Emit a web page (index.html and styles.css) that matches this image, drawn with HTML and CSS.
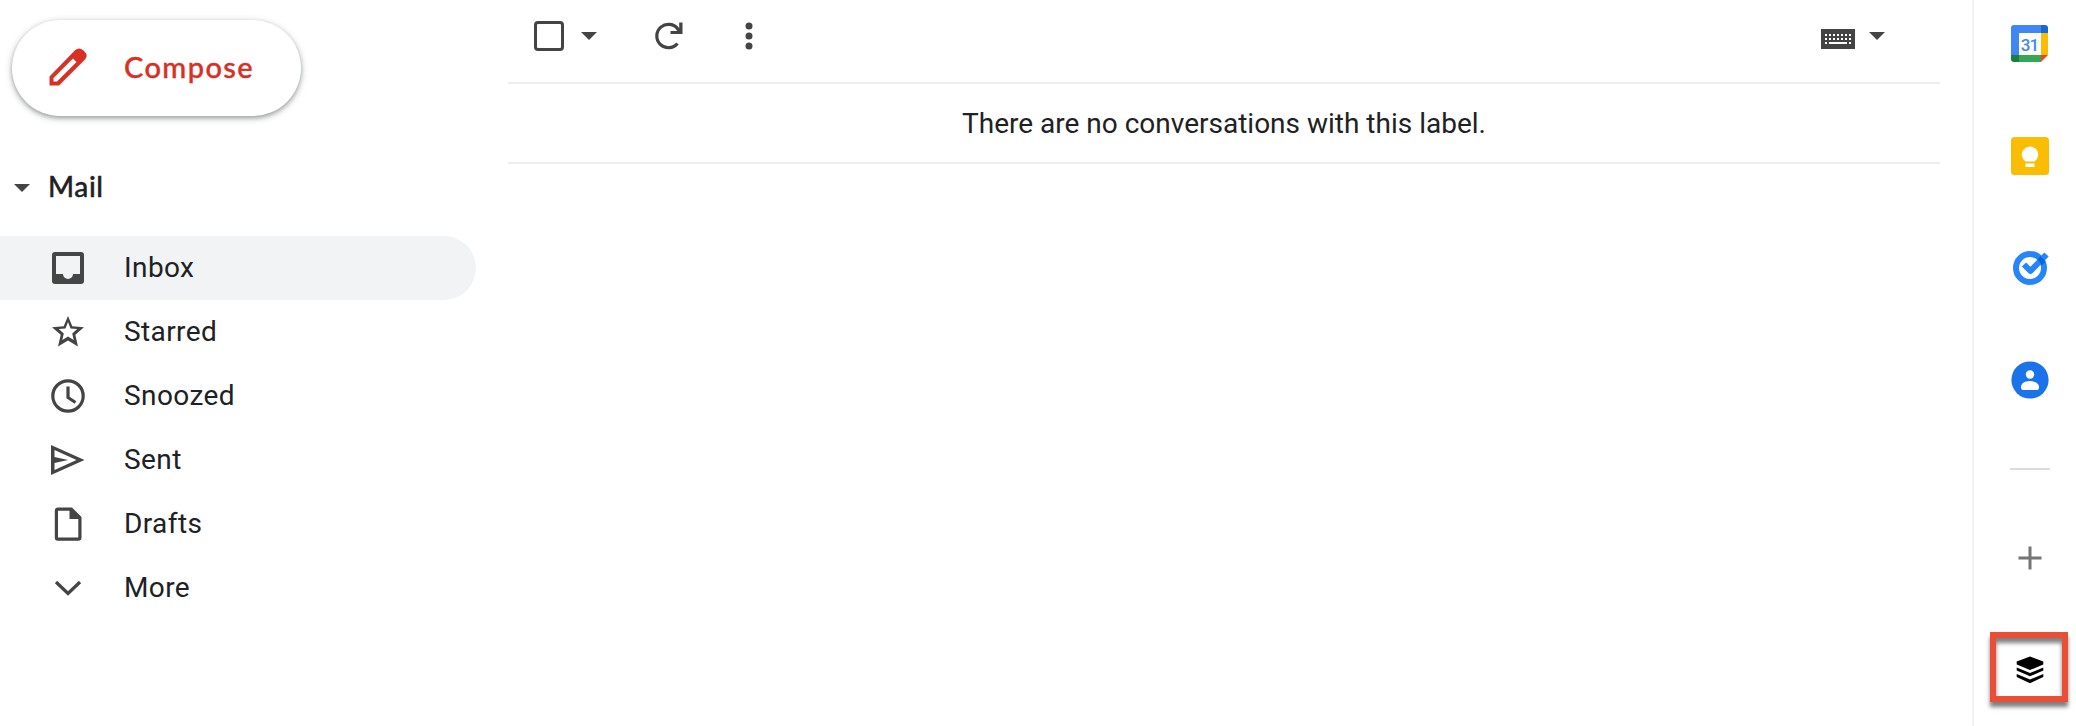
FILE: index.html
```html
<!DOCTYPE html>
<html lang="en">
<head>
  <meta charset="UTF-8">
  <meta name="viewport" content="width=device-width, initial-scale=1.0">
  <title>Inbox</title>
  <link rel="stylesheet" href="styles.css">
</head>
<body>
  <aside class="sidebar">
    <button class="compose">
      <svg width="38" height="38" viewBox="0 0 38 38">
        <path fill="#d93025" fill-rule="evenodd" d="M0.500 37.500v-9L26 2.200q4-3.500 8-.200l1.500 1.500q4 4 .500 8L10 37.500zM4.500 33.500h3.500L27.500 14l-3.500-3.500L4.500 30z"/>
      </svg>
      <span>Compose</span>
    </button>

    <h2 class="section-title"><i class="caret"></i><span>Mail</span></h2>

    <ul class="folders">
      <li class="active">
        <svg width="36" height="36" viewBox="0 0 36 36">
          <path fill="#444746" fill-rule="evenodd" d="M5 2h26a3 3 0 0 1 3 3v26a3 3 0 0 1-3 3H5a3 3 0 0 1-3-3V5a3 3 0 0 1 3-3zM6 6v18h7a5 5 0 0 0 10 0h7V6z"/>
        </svg>
        Inbox
      </li>
      <li>
        <svg width="36" height="36" viewBox="0 0 36 36">
          <path fill="#444" fill-rule="evenodd" d="M18 2l4.300 10.300L34 13.300l-8.700 7.500L28 32.500l-10-6.100-10 6.100 2.700-11.700L2 13.300l11.700-1zM18 8l-2.500 6.500-6.700.500 5 4.400-1.500 6.600 5.700-3.400 5.700 3.400-1.500-6.600 5-4.400-6.700-.500z"/>
        </svg>
        Starred
      </li>
      <li>
        <svg width="36" height="36" viewBox="0 0 36 36" fill="none" stroke="#444" stroke-width="3.200">
          <circle cx="18" cy="18" r="15.200"/>
          <path d="M18 8.500v11l7.500 5"/>
        </svg>
        Snoozed
      </li>
      <li>
        <svg width="36" height="36" viewBox="0 0 36 36">
          <path fill="#444" fill-rule="evenodd" d="M1 3l33.500 15L1 33zM4.500 8v7L18 18 4.500 21v7L26.500 18z"/>
        </svg>
        Sent
      </li>
      <li>
        <svg width="36" height="36" viewBox="0 0 36 36">
          <path fill="#444" fill-rule="evenodd" d="M8 1.500h14L31.500 11v20.500a3.200 3.200 0 0 1-3.200 3.200H8a3.200 3.200 0 0 1-3.200-3.200V4.700A3.200 3.200 0 0 1 8 1.500zM8 4.700v26.800h20.300V13H19.500V4.700z"/>
        </svg>
        Drafts
      </li>
      <li>
        <svg width="36" height="36" viewBox="0 0 36 36" fill="none" stroke="#444" stroke-width="3.200">
          <path d="M6 12l12 11.500L30 12"/>
        </svg>
        More
      </li>
    </ul>
  </aside>

  <main class="main">
    <div class="toolbar">
      <span class="checkbox"></span>
      <i class="caret caret-select"></i>
      <svg class="refresh" width="28" height="28" viewBox="0 0 28 28">
        <path fill="none" stroke="#444" stroke-width="3.200" d="M22.500 21.500A11.700 11.700 0 1 1 23 7.200L26 10.500"/>
        <path fill="#444" d="M24.200 0.500h3.300v11.500H15.500V9h6l2.700-2z"/>
      </svg>
      <svg class="dots" width="8" height="28" viewBox="0 0 8 28" fill="#444">
        <circle cx="4" cy="4" r="3.500"/>
        <circle cx="4" cy="14" r="3.500"/>
        <circle cx="4" cy="24" r="3.500"/>
      </svg>
      <svg class="keyboard" width="34" height="20" viewBox="0 0 34 20">
        <path fill="#444" d="M0 0h34v20H0z"/>
        <path stroke="#fff" stroke-width="2" stroke-dasharray="2 2" d="M4 6h26M4 10h26"/>
        <path stroke="#fff" stroke-width="2" d="M4 14h2M8 14h18M28 14h2"/>
      </svg>
      <i class="caret caret-input"></i>
    </div>
    <p class="empty">There are no conversations with this label.</p>
  </main>

  <nav class="addons">
    <svg class="calendar" width="38" height="38" viewBox="0 0 38 38">
      <path fill="#4285f4" d="M3 0h27v8H8v22H0V3a3 3 0 0 1 3-3z"/>
      <path fill="#1967d2" d="M30 0h4a3 3 0 0 1 3 3v5h-7z"/>
      <path fill="#fbbc04" d="M30 8h7v22h-7z"/>
      <path fill="#34a853" d="M8 30h22v7H8z"/>
      <path fill="#188038" d="M0 30h8v7H3a3 3 0 0 1-3-3z"/>
      <path fill="#ea4335" d="M30 30h7l-7 7z"/>
      <text x="18.500" y="25.500" text-anchor="middle">31</text>
    </svg>
    <svg class="keep" width="38" height="38" viewBox="0 0 38 38">
      <rect width="38" height="38" rx="3.500" fill="#fbbc04"/>
      <path fill="#fff" d="M14.500 24.500a8.200 8.200 0 1 1 9 0zM14.500 26.500h9v3.500h-9z"/>
    </svg>
    <svg class="tasks" width="38" height="38" viewBox="0 0 38 38">
      <circle cx="19" cy="19" r="14" fill="none" stroke="#2684fc" stroke-width="6"/>
      <path fill="none" stroke="#2684fc" stroke-width="6" stroke-linejoin="round" d="M13 15.500l6.500 6.500L35.500 5.500"/>
      <path fill="#0066da" d="M26.500 10.500l3-3.300q3.500 2.500 4.800 5.800l-3.800 3.500q-1-3.800-4-6z"/>
    </svg>
    <svg class="contacts" width="38" height="38" viewBox="0 0 38 38">
      <circle cx="19" cy="19" r="18.600" fill="#1a73e8"/>
      <circle cx="19" cy="13.500" r="4.200" fill="#fff"/>
      <path fill="#fff" d="M10 26c0-8 18-8 18 0q0 3-2 3H12q-2 0-2-3z"/>
    </svg>
    <hr>
    <svg class="plus" width="24" height="24" viewBox="0 0 24 24" stroke="#757575" stroke-width="3">
      <path d="M0.500 12h23M12 .500v23"/>
    </svg>
    <div class="highlight">
      <svg width="28" height="28" viewBox="0 0 28 28">
        <path d="M14 .500l13.300 5v3L14 14 .700 8.500v-3z"/>
        <path d="M.700 11.500L14 17l13.300-5.500v3L14 20.300.700 14.500z"/>
        <path d="M.700 18L14 23.500 27.300 18v3L14 27.200.700 21z"/>
      </svg>
    </div>
  </nav>
</body>
</html>
```
FILE: styles.css
```css
* {
  box-sizing: border-box;
}

body {
  font-family: Roboto, Arial, sans-serif;
  font-size: 28px;
  color: #202124;
  background: #fff;
  margin: 0;
  height: 726px;
  display: flex;
  overflow: hidden;
}

svg {
  display: block;
  flex: none;
}

.caret {
  flex: none;
  width: 16px;
  height: 8px;
  background: #444;
  clip-path: polygon(0 0, 100% 0, 50% 100%);
}

.sidebar {
  width: 508px;
  padding-top: 20px;
}

.compose {
  display: flex;
  align-items: center;
  width: 289px;
  height: 96px;
  margin-left: 12px;
  padding: 0 0 2px 37px;
  border: 0;
  border-radius: 48px;
  background: #fff;
  box-shadow: 0 2px 4px rgba(60, 64, 67, 0.4), 0 2px 6px 2px rgba(60, 64, 67, 0.15);
  font: 500 29px Lato, sans-serif;
  letter-spacing: 1.4px;
  color: #d93025;
}

.compose span {
  margin-left: 37px;
  padding-bottom: 2px;
  -webkit-text-stroke: 0.4px #d93025;
}

.section-title {
  display: flex;
  align-items: center;
  height: 64px;
  margin: 39px 0 17px;
  padding-left: 14px;
  font: 500 28px Lato, sans-serif;
  letter-spacing: 0.6px;
}

.section-title .caret {
  margin: 2px 18px 0 0;
}

.section-title span {
  padding-bottom: 2px;
  -webkit-text-stroke: 0.4px #202124;
}

.folders {
  list-style: none;
  margin: 0;
  padding: 0;
}

.folders li {
  display: flex;
  align-items: center;
  width: 476px;
  height: 64px;
  padding: 0 0 1px 50px;
  letter-spacing: 0.4px;
  border-radius: 0 32px 32px 0;
}

.folders svg {
  margin-right: 38px;
}

.folders .active {
  background: #f1f3f4;
}

.main {
  width: 1432px;
}

.toolbar {
  display: flex;
  align-items: center;
  height: 84px;
  padding: 0 55px 10px 26px;
  border-bottom: 2px solid #eee;
}

.checkbox {
  width: 30px;
  height: 30px;
  border: 3px solid #444;
  border-radius: 4px;
}

.caret-select {
  margin-left: 17px;
}

.refresh {
  margin-left: 58px;
}

.dots {
  margin-left: 62px;
}

.keyboard {
  margin: 6px 0 0 auto;
}

.caret-input {
  margin-left: 14px;
}

.empty {
  height: 80px;
  margin: 0;
  border-bottom: 2px solid #eee;
  line-height: 79px;
  text-align: center;
}

.addons {
  display: flex;
  flex-direction: column;
  align-items: center;
  width: 104px;
  margin-left: 32px;
  padding: 25px 0 0 10px;
  border-left: 2px solid #f1f1f1;
}

.calendar text {
  font: 500 17px Roboto, sans-serif;
  letter-spacing: -1px;
  fill: #4285f4;
}

.keep,
.tasks,
.contacts {
  margin-top: 74px;
}

.addons hr {
  width: 40px;
  height: 2px;
  margin: 69px 0 0;
  border: 0;
  background: #dadce0;
}

.plus {
  margin-top: 76px;
}

.highlight {
  display: flex;
  align-items: center;
  justify-content: center;
  width: 78px;
  height: 70px;
  margin: 62px 2px 0 0;
  padding: 5px 0 0 2px;
  border: 6px solid #e94f37;
  box-shadow: 0 5px 4px rgba(0, 0, 0, 0.5), inset 0 5px 4px rgba(0, 0, 0, 0.5);
}
```
